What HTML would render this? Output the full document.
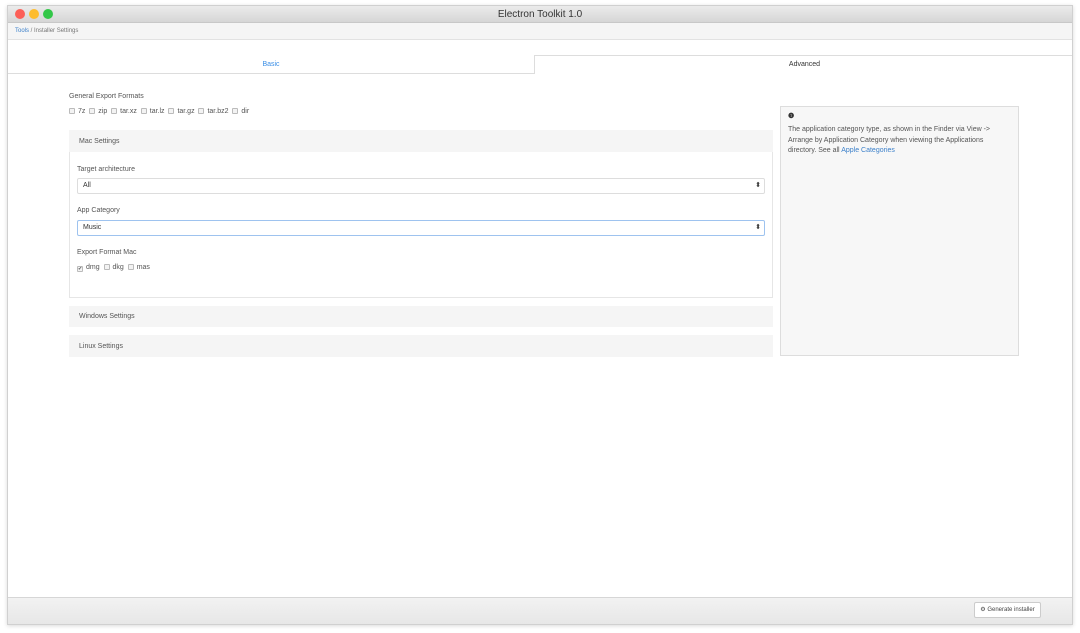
<!DOCTYPE html>
<html><head><style>
*{box-sizing:border-box;margin:0;padding:0}
body{width:1080px;height:633px;background:#fff;font-family:"Liberation Sans",sans-serif;color:#444;position:relative;overflow:hidden}
.win{position:absolute;left:7px;top:5px;width:1066px;height:620px;border:1px solid #d0d0d0;box-shadow:0 1px 4px rgba(0,0,0,.15);background:#fff;overflow:hidden}
.title{height:17px;background:linear-gradient(#ebebeb,#d6d6d6);border-bottom:1px solid #c8c8c8;position:relative;text-align:center;font-size:10px;line-height:17px;color:#333}
.dot{position:absolute;top:3px;width:10px;height:10px;border-radius:50%}
.crumb{height:17px;background:#f5f5f5;border-bottom:1px solid #e2e2e2;font-size:6px;line-height:16px;padding-left:7px;color:#777}
.crumb a{color:#3a7fc9}
.abs{position:absolute}
.lbl{font-size:7px;color:#555}
.cb{display:inline-block;width:6px;height:6px;border:1px solid #bbb;border-radius:1px;background:#f3f3f3;vertical-align:-1px;margin-right:3px}
.sel{position:absolute;left:69px;width:688px;height:16px;border:1px solid #ddd;border-radius:2px;font-size:7px;line-height:14px;padding-left:5px;color:#333}
.sel:after{content:"⬍";position:absolute;right:3px;top:0;font-size:7px}
.ph{position:absolute;left:61px;width:704px;background:#f5f5f5;font-size:7px;color:#555;padding-left:10px}
</style></head><body>
<div class="win">
<div class="title"><span class="dot" style="left:7px;background:#fc5f57"></span><span class="dot" style="left:21px;background:#fdbc2e"></span><span class="dot" style="left:35px;background:#33c748"></span>Electron Toolkit 1.0</div>
<div class="crumb"><a>Tools</a> / Installer Settings</div>
<div class="abs" style="left:0;top:49px;width:526px;height:19px;border-bottom:1px solid #ddd;text-align:center;font-size:7px;line-height:20px;color:#3a8ee6">Basic</div>
<div class="abs" style="left:526px;top:49px;width:540px;height:19px;border-top:1px solid #ddd;border-left:1px solid #ddd;text-align:center;font-size:7px;line-height:18px;color:#333">Advanced</div>
<div class="abs lbl" style="left:61px;top:87px">General Export Formats</div>
<div class="abs lbl" style="left:61px;top:102px"><span class="cb"></span>7z &nbsp;<span class="cb"></span>zip &nbsp;<span class="cb"></span>tar.xz &nbsp;<span class="cb"></span>tar.lz &nbsp;<span class="cb"></span>tar.gz &nbsp;<span class="cb"></span>tar.bz2 &nbsp;<span class="cb"></span>dir</div>
<div class="abs" style="left:61px;top:124px;width:704px;height:168px;border:1px solid #e6e6e6"></div>
<div class="ph" style="top:124px;height:22px;line-height:24px">Mac Settings</div>
<div class="abs lbl" style="left:69px;top:160px">Target architecture</div>
<div class="sel" style="top:172px">All</div>
<div class="abs lbl" style="left:69px;top:201px">App Category</div>
<div class="sel" style="top:214px;border-color:#9ec3ef">Music</div>
<div class="abs lbl" style="left:69px;top:243px">Export Format Mac</div>
<div class="abs lbl" style="left:69px;top:258px"><span class="cb" style="font-size:5px;line-height:4px;text-align:center">✔</span>dmg &nbsp;<span class="cb"></span>dkg &nbsp;<span class="cb"></span>mas</div>
<div class="ph" style="top:300px;height:21px;line-height:22px">Windows Settings</div>
<div class="ph" style="top:329px;height:22px;line-height:23px">Linux Settings</div>
<div class="abs" style="left:772px;top:100px;width:239px;height:250px;background:#f7f7f7;border:1px solid #ddd;padding:5px 7px;font-size:7px;line-height:10.3px;color:#555"><b style="color:#333">❶</b><div style="margin-top:3px;width:205px">The application category type, as shown in the Finder via View -&gt; Arrange by Application Category when viewing the Applications directory. See all <span style="color:#3a7fc9">Apple Categories</span></div></div>
<div class="abs" style="left:0;top:591px;width:1066px;height:29px;background:linear-gradient(#f2f2f2,#e6e6e6);border-top:1px solid #d6d6d6"></div>
<div class="abs" style="left:966px;top:596px;width:67px;height:16px;background:#fff;border:1px solid #ccc;border-radius:2px;font-size:6px;line-height:14px;text-align:center;color:#444">⚙ Generate installer</div>
</div>
</body></html>
